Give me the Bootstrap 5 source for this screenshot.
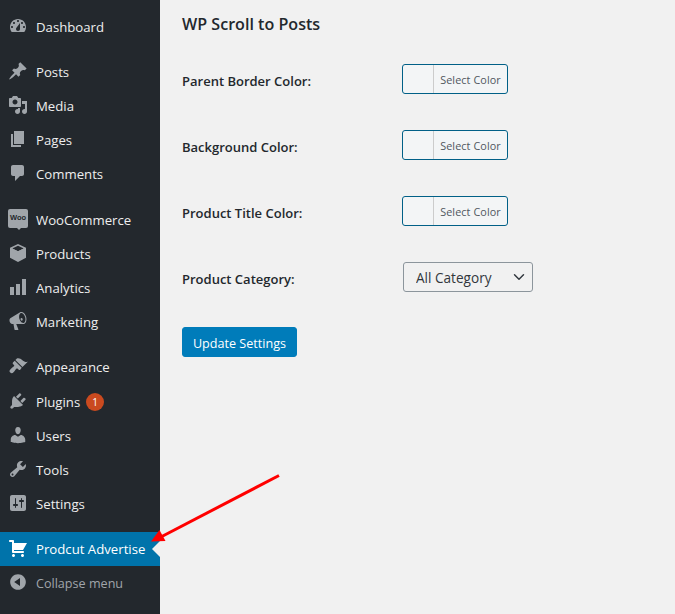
<!DOCTYPE html>
<html lang="en"><head><meta charset="utf-8"><title>WP Scroll to Posts</title>
<link rel="stylesheet" href="https://cdn.jsdelivr.net/npm/bootstrap@5.3.0/dist/css/bootstrap.min.css">
<style>
html,body{height:100%;}
body{background:#f1f1f1;color:#23282d;font-family:"Open Sans","Noto Sans","Liberation Sans",sans-serif;font-size:13px;overflow:hidden;}
.wp-shell{height:614px;position:relative;}
.wp-side{width:160px;background:#23282d;padding-top:10px;flex:none;}
.wp-group{margin-bottom:11px;}
.wp-group.wide{margin-bottom:12px;}
.wp-item{height:34px;color:#eee;font-size:13.2px;position:relative;padding-top:2px;}
.wp-ico{width:36px;flex:none;display:flex;justify-content:center;margin-top:-4px;}
.wp-ico svg{width:20px;height:20px;fill:#a0a5aa;display:block;}
.wp-item.tall{height:35px;padding-top:0;}
.wp-item.active{background:#0073aa;color:#fff;}
.wp-item.active .wp-ico svg{fill:#fff;}
.wp-item.active::after{content:"";position:absolute;right:0;top:9px;border:8px solid transparent;border-right-color:#f1f1f1;border-left-width:0;}
.wp-item.muted{color:#a0a5aa;font-size:12.6px;}
.wp-count{width:18px;height:18px;border-radius:50%;background:#ca4a1f;color:#fff;font-size:10px;line-height:18px;text-align:center;margin-left:6px;margin-top:-2px;}
.wp-woo{width:20px;height:19px;background:#a0a5aa;border-radius:2px;color:#23282d;font-size:7.5px;font-weight:700;line-height:18px;text-align:center;position:relative;font-family:"Liberation Sans",sans-serif;margin-top:-2px;}
.wp-woo::after{content:"";position:absolute;left:9px;top:19px;border:2px solid transparent;border-top-color:#a0a5aa;}
.wp-main{padding:14px 0 0 22px;}
.wp-title{font-size:16.1px;font-weight:600;line-height:21px;margin:0 0 29px;color:#23282d;}
.wp-row{height:30px;margin-bottom:36px;}
.wp-label{width:220px;flex:none;font-size:13px;font-weight:600;padding-top:6px;margin:0;}
.wp-color{width:106px;height:30px;padding:0;border:1px solid #016087;border-radius:3px;background:#f3f5f6;overflow:hidden;display:flex;align-items:stretch;}
.wp-swatch{width:31px;border-right:1px solid #ccc;flex:none;}
.wp-sel-text{flex:1;font-size:10.8px;line-height:30px;color:#50575e;text-align:center;letter-spacing:.1px;}
.wp-select{width:130px;height:30px;margin-left:1px;padding:2px 24px 0 12px;font-size:13.6px;line-height:26px;color:#32373c;border:1px solid #8c959c;border-radius:3px;background-color:#f1f1f1;background-position:right 5px center;background-size:16px 12px;font-family:inherit;}
.wp-submit{width:115px;height:30px;padding:3px 0 0;margin-top:-1px;background:#007cba;border:1px solid #007cba;border-radius:3px;color:#fff;font-size:12.6px;line-height:24px;}
.wp-arrow{position:absolute;left:0;top:0;pointer-events:none;}
</style></head>
<body>
<div class="wp-shell d-flex">
<aside class="wp-side">
<div class="wp-group">
<div class="wp-item d-flex align-items-center"><span class="wp-ico"><svg viewBox="0 0 20 20"><path fill-rule="evenodd" d="M3.76 16h12.48c1.1-1.37 1.76-3.11 1.76-5 0-4.42-3.58-8-8-8s-8 3.58-8 8c0 1.89.66 3.63 1.76 5zM10 4c.55 0 1 .45 1 1s-.45 1-1 1-1-.45-1-1 .45-1 1-1zM6 6c.55 0 1 .45 1 1s-.45 1-1 1-1-.45-1-1 .45-1 1-1zm8 0c.55 0 1 .45 1 1s-.45 1-1 1-1-.45-1-1 .45-1 1-1zm-5.37 5.55L12 7v6c0 1.1-.9 2-2 2s-2-.9-2-2c0-.57.24-1.08.63-1.45zM4 10c.55 0 1 .45 1 1s-.45 1-1 1-1-.45-1-1 .45-1 1-1zm12 0c.55 0 1 .45 1 1s-.45 1-1 1-1-.45-1-1 .45-1 1-1z"/></svg></span>Dashboard</div>
</div>
<div class="wp-group wide">
<div class="wp-item d-flex align-items-center"><span class="wp-ico"><svg viewBox="0 0 20 20"><path d="M10.44 3.02l1.82-1.82 6.36 6.35-1.83 1.82c-1.05-.68-2.48-.57-3.41.36l-.75.75c-.92.93-1.04 2.35-.35 3.41l-1.83 1.82-2.41-2.41-2.8 2.79c-.42.42-3.38 2.71-3.8 2.29s1.86-3.39 2.28-3.81l2.79-2.79L4.1 9.36l1.83-1.82c1.05.69 2.48.57 3.4-.36l.75-.75c.93-.92 1.05-2.35.36-3.41z"/></svg></span>Posts</div>
<div class="wp-item d-flex align-items-center"><span class="wp-ico"><svg viewBox="0 0 20 20"><path fill-rule="evenodd" d="M13 11V4c0-.55-.45-1-1-1h-1.67L9 1H5L3.67 3H2c-.55 0-1 .45-1 1v7c0 .55.45 1 1 1h10c.55 0 1-.45 1-1zM7 4.500c1.38 0 2.500 1.120 2.500 2.500S8.380 9.500 7 9.500 4.500 8.380 4.500 7 5.620 4.500 7 4.500zM14 6h5v10.500c0 1.380-1.120 2.500-2.500 2.500S14 17.880 14 16.500s1.120-2.500 2.500-2.500c.17 0 .34.02.5.05V9h-3V6zm-4 8.050V13h2v3.500c0 1.380-1.120 2.500-2.500 2.500S7 17.880 7 16.500 8.120 14 9.500 14c.17 0 .34.02.5.05z"/></svg></span>Media</div>
<div class="wp-item d-flex align-items-center"><span class="wp-ico"><svg viewBox="0 0 20 20"><path d="M6 15V2h10v13H6zm-1 1h8v2H3V5h2v11z"/></svg></span>Pages</div>
<div class="wp-item d-flex align-items-center"><span class="wp-ico"><svg viewBox="0 0 20 20"><path d="M5 2h9c1.1 0 2 .9 2 2v7c0 1.1-.9 2-2 2h-2l-5 5v-5H5c-1.1 0-2-.9-2-2V4c0-1.1.9-2 2-2z"/></svg></span>Comments</div>
</div>
<div class="wp-group">
<div class="wp-item d-flex align-items-center"><span class="wp-ico"><span class="wp-woo">Woo</span></span>WooCommerce</div>
<div class="wp-item d-flex align-items-center"><span class="wp-ico"><svg viewBox="0 0 20 20"><path fill-rule="evenodd" d="M10 1l8 3.800v10L10 19l-8-4.200v-10zM10 2.700L4.200 5.400 10 8.300l5.800-2.900z"/><path d="M3 5.800l1-.5L10 8.300l6-3 1 .5-7 3.600z"/></svg></span>Products</div>
<div class="wp-item d-flex align-items-center"><span class="wp-ico"><svg viewBox="0 0 20 20"><path d="M18 18V2h-4v16h4zm-6 0V7H8v11h4zm-6 0v-8H2v8h4z"/></svg></span>Analytics</div>
<div class="wp-item d-flex align-items-center"><span class="wp-ico"><svg viewBox="0 0 20 20"><path fill-rule="evenodd" d="M18.150 5.940c.46 1.620.38 3.220-.02 4.480-.42 1.280-1.260 2.180-2.300 2.480-.16.06-.26.06-.4.06-.06.02-.12.02-.18.02-.06.02-.14.02-.22.02h-6.800l2.220 5.500c.02.14-.06.26-.14.34-.08.1-.24.16-.34.16H6.950c-.1 0-.26-.06-.34-.16-.08-.08-.16-.2-.14-.34l-1-5.500H4.250l-.02-.02c-.5.06-1.080-.18-1.540-.62s-.88-1.080-1.060-1.880c-.24-.8-.2-1.560-.02-2.200.18-.62.58-1.080 1.060-1.300l.02-.02 9-5.400c.1-.06.18-.1.24-.16.06-.04.14-.08.24-.12.16-.08.28-.12.5-.18 1.040-.3 2.240.1 3.220 1 .98.88 1.800 2.240 2.260 3.860zm-2.580 5.980h-.02c.4-.1.74-.34 1.040-.7.58-.7.86-1.760.86-3.040-.02-.64-.1-1.300-.28-1.980-.34-1.360-1.020-2.500-1.780-3.240-.38-.38-.8-.64-1.220-.78-.42-.16-.84-.2-1.220-.1-.38.12-.72.34-1.010.7-.58.7-.86 1.760-.84 3.040 0 .64.08 1.300.26 1.980.34 1.340 1 2.480 1.780 3.240.38.38.8.64 1.220.8.4.14.82.18 1.220.08zm-2.200-4.840c.4-.12 1.100.14 1.300.98.22.84-.26 1.480-.66 1.600-.4.1-.94-.08-1.360-.98-.3-.66.14-1.480.72-1.600z"/></svg></span>Marketing</div>
</div>
<div class="wp-group">
<div class="wp-item tall d-flex align-items-center"><span class="wp-ico"><svg viewBox="0 0 20 20"><path d="M14.480 11.060L7.410 3.990l1.500-1.500c.5-.56 2.300-.47 3.510.32 1.210.8 1.430 1.280 2.910 2.100 1.180.64 2.450 1.260 4.450.85zm-.71.71L6.700 4.700 4.930 6.470c-.39.39-.39 1.020 0 1.410l1.060 1.060c.39.39.39 1.030 0 1.420-.6.6-1.430 1.110-2.210 1.690-.35.26-.7.53-1.010.84-1.340 1.340-1.760 2.270-.52 3.520 1.250 1.240 2.180.82 3.520-.52.31-.31.58-.66.84-1.010.58-.78 1.090-1.610 1.690-2.210.39-.39 1.030-.39 1.420 0l1.060 1.060c.39.39 1.020.39 1.410 0z"/></svg></span>Appearance</div>
<div class="wp-item d-flex align-items-center"><span class="wp-ico"><svg viewBox="0 0 20 20"><path d="M13.110 4.360L9.870 7.600 8 5.730l3.240-3.240c.35-.34 1.050-.2 1.560.32.52.51.66 1.210.31 1.550zm-8 1.770l.91-1.120 9.010 9.010-1.190.84c-.71.71-2.630 1.160-3.820 1.160H6.140L4.900 17.260c-.59.59-1.540.59-2.120 0-.59-.58-.59-1.530 0-2.120l1.240-1.240v-3.880c0-1.130.4-3.190 1.090-3.890zm7.260 3.970l3.240-3.240c.34-.35 1.040-.21 1.550.31.52.51.66 1.210.31 1.550l-3.240 3.250z"/></svg></span>Plugins<span class="wp-count">1</span></div>
<div class="wp-item d-flex align-items-center"><span class="wp-ico"><svg viewBox="0 0 20 20"><path d="M10 9.250c-2.270 0-2.730-3.440-2.730-3.440C7 4.020 7.820 2 9.970 2c2.160 0 2.980 2.020 2.710 3.810 0 0-.41 3.440-2.680 3.440zm0 2.570L12.720 10c2.390 0 4.520 2.330 4.520 4.530v2.490s-3.650 1.130-7.240 1.130c-3.650 0-7.240-1.130-7.240-1.130v-2.490c0-2.250 1.940-4.480 4.470-4.480z"/></svg></span>Users</div>
<div class="wp-item d-flex align-items-center"><span class="wp-ico"><svg viewBox="0 0 20 20"><path fill-rule="evenodd" d="M16.680 9.770c-1.340 1.340-3.300 1.670-4.950.99l-5.410 6.520c-.99.99-2.590.99-3.580 0s-.99-2.590 0-3.570l6.520-5.420c-.68-1.650-.35-3.610.99-4.950 1.280-1.280 3.120-1.620 4.720-1.060l-2.890 2.890 2.820 2.820 2.860-2.870c.53 1.580.18 3.390-1.080 4.650zM3.810 16.210c.4.39 1.040.39 1.430 0 .4-.4.4-1.040 0-1.430-.39-.4-1.030-.4-1.430 0-.39.39-.39 1.030 0 1.430z"/></svg></span>Tools</div>
<div class="wp-item d-flex align-items-center"><span class="wp-ico"><svg viewBox="0 0 20 20"><path fill-rule="evenodd" d="M18 16V4c0-1.100-.9-2-2-2H4c-1.100 0-2 .9-2 2v12c0 1.100.9 2 2 2h12c1.100 0 2-.9 2-2zM8 11h1c.55 0 1 .45 1 1s-.45 1-1 1H8v1.500c0 .28-.22.5-.5.5s-.5-.22-.5-.5V13H6c-.55 0-1-.45-1-1s.45-1 1-1h1V5.500c0-.28.22-.5.5-.5s.5.22.5.5V11zm5-2h-1c-.55 0-1-.45-1-1s.45-1 1-1h1V5.500c0-.28.22-.5.5-.5s.5.22.5.5V7h1c.55 0 1 .45 1 1s-.45 1-1 1h-1v5.500c0 .28-.22.5-.5.5s-.5-.22-.5-.5V9z"/></svg></span>Settings</div>
</div>
<div class="wp-item active d-flex align-items-center"><span class="wp-ico"><svg viewBox="0 0 20 20"><path d="M6 13h9c.55 0 1 .45 1 1s-.45 1-1 1H5c-.55 0-1-.45-1-1V4H2c-.55 0-1-.45-1-1s.45-1 1-1h3c.55 0 1 .45 1 1v2h13l-4 7H6v1zm-.5 3c.83 0 1.500.67 1.500 1.500S6.330 19 5.500 19 4 18.330 4 17.500 4.670 16 5.500 16zm9 0c.83 0 1.500.67 1.500 1.500s-.67 1.500-1.500 1.500-1.500-.67-1.500-1.500.67-1.500 1.500-1.500z"/></svg></span>Prodcut Advertise</div>
<div class="wp-item muted d-flex align-items-center"><span class="wp-ico"><svg viewBox="0 0 20 20"><path fill-rule="evenodd" d="M10 2.160c4.330 0 7.840 3.510 7.840 7.840s-3.510 7.840-7.840 7.840S2.160 14.330 2.160 10 5.710 2.160 10 2.160zm2 11.720V6.120L6.180 9.970z"/></svg></span>Collapse menu</div>
</aside>
<main class="wp-main flex-grow-1">
<h1 class="wp-title">WP Scroll to Posts</h1>
<form>
<div class="wp-row d-flex align-items-center"><label class="wp-label">Parent Border Color:</label><button type="button" class="wp-color"><span class="wp-swatch"></span><span class="wp-sel-text">Select Color</span></button></div>
<div class="wp-row d-flex align-items-center"><label class="wp-label">Background Color:</label><button type="button" class="wp-color"><span class="wp-swatch"></span><span class="wp-sel-text">Select Color</span></button></div>
<div class="wp-row d-flex align-items-center"><label class="wp-label">Product Title Color:</label><button type="button" class="wp-color"><span class="wp-swatch"></span><span class="wp-sel-text">Select Color</span></button></div>
<div class="wp-row d-flex align-items-center"><label class="wp-label">Product Category:</label><select class="form-select wp-select"><option>All Category</option></select></div>
<button type="button" class="btn btn-primary wp-submit d-block">Update Settings</button>
</form>
</main>
<svg class="wp-arrow" width="675" height="614" viewBox="0 0 675 614"><path d="M279 475.500L158 538.500" stroke="#f00" stroke-width="3" fill="none"/><path d="M151 541.500L159.500 530L165.500 541z" fill="#f00"/></svg>
</div>
</body></html>
